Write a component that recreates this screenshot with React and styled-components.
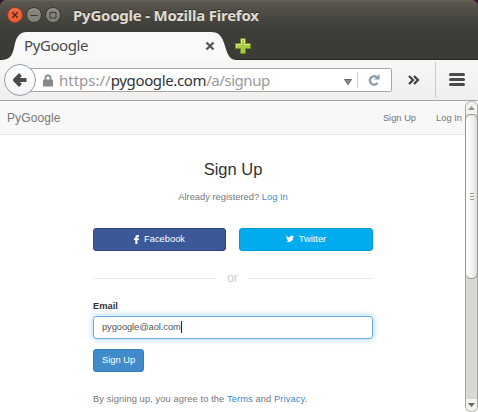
import React from 'react';
import styled, { createGlobalStyle } from 'styled-components';

const Global = createGlobalStyle`
  * { box-sizing: border-box; }
  html, body { margin: 0; width: 478px; height: 412px; overflow: hidden; background: #fff; }
  svg { display: block; flex: none; }
`;
const Window = styled.div`
  width: 478px; height: 412px; display: flex; flex-direction: column; overflow: hidden;
  background: #35102d; font-family: "Noto Sans", sans-serif;
`;
const Chrome = styled.header`
  height: 60px; flex: none; border-radius: 6px 6px 0 0; border-bottom: 1px solid #262520;
  background: linear-gradient(#6a665d 0, #59564e 2px, #3d3c37 29px, #3c3b36 59px);
`;
const TitleBar = styled.div`
  height: 32px; padding: 0 0 3px 7px; display: flex; align-items: center; gap: 3px;
`;
const Title = styled.div`
  margin-left: 9px; font-size: 15px; line-height: 20px; font-weight: 700; white-space: nowrap;
  letter-spacing: ${p => p.$spacing}px; color: #dfdbd2; text-shadow: 0 -1px #302f2b;
`;
const TabStrip = styled.div`
  height: 28px; display: flex; align-items: center; position: relative;
`;
const TabShape = styled.svg`
  position: absolute; left: 0; top: 0;
`;
const TabLabel = styled.div`
  position: relative; width: 181px; padding-left: 24px; font-size: 15px; line-height: 20px;
  letter-spacing: ${p => p.$spacing}px; color: #4c4c4c; margin-top: -2px;
`;
const TabIcon = styled.div`
  position: relative; margin-left: ${p => p.$gap}px;
`;
const Toolbar = styled.div`
  height: 41px; flex: none; display: flex; align-items: center; position: relative;
  background: linear-gradient(#f7f7f6, #f0efed); border-bottom: 1px solid #aaa7a3; padding: 0 13px 1px 4px;
`;
const Address = styled.div`
  width: 374px; height: 24px; margin-left: -18px; padding-left: 25px; margin-top: 1px;
  display: flex; align-items: center; background: #fff; border: 1px solid #a9a7a4;
  border-left: 0; border-radius: 0 2px 2px 0;
`;
const BackButton = styled.div`
  position: relative; z-index: 1; width: 32px; height: 32px; border: 1px solid #8f9bab; border-radius: 50%;
  display: grid; place-items: center; flex: none; background: linear-gradient(#fff, #f4f4f4);
`;
const Url = styled.div`
  width: 285px; margin-left: 6px; font-size: 15px; line-height: 20px; color: #999; white-space: nowrap;
  b { font-weight: 400; color: #333; letter-spacing: -.36px; }
  span { letter-spacing: -.45px; }
`;
const DropMarker = styled.div`
  margin-top: 3px;
`;
const Separator = styled.div`
  width: 1px; height: ${p => p.$height}px; background: #cfcdca; flex: none;
  margin: 0 ${p => p.$right}px 0 ${p => p.$left}px;
`;
const Viewport = styled.div`
  flex: 1; min-height: 0; display: flex; background: #fff;
`;
const Page = styled.div`
  width: 465px; font-family: "Liberation Sans", Arial, sans-serif; font-size: 9.33px; color: #777;
`;
const Nav = styled.nav`
  height: 34px; padding: 0 3px 0 7px; display: flex; align-items: center; gap: 20px;
  background: #f8f8f8; border-bottom: 1px solid #e7e7e7;
`;
const Brand = styled.div`
  flex: 1; font-size: 12px; letter-spacing: .12px;
`;
const Form = styled.main`
  width: 280px; margin-left: 93px;
`;
const Heading = styled.h1`
  margin: 24px 0 0; font-size: 16.5px; line-height: 21px; font-weight: 400; text-align: center; color: #333;
`;
const Registered = styled.p`
  margin: 11px 0 0; line-height: 13px; text-align: center; letter-spacing: 0;
`;
const Link = styled.a`
  color: #428bca;
`;
const SocialRow = styled.div`
  display: grid; grid-template-columns: 133px 134px; gap: 13px; margin-top: 24px;
`;
const Button = styled.button`
  height: 23px; width: ${p => p.$width || 'auto'}; padding: 0 0 1px; border: 1px solid ${p => p.$edge};
  border-radius: 3px; background: ${p => p.$fill}; color: #fff; font: inherit;
  display: flex; align-items: center; justify-content: center; gap: 5px;
`;
const Divider = styled.div`
  height: 16px; margin-top: 19px; display: flex; align-items: center; justify-content: space-between;
  font-size: 12px; line-height: 14px; color: #ccc;
`;
const Rule = styled.div`
  width: ${p => p.$width}px; height: 1px; background: #eaeaea;
`;
const Label = styled.label`
  display: block; margin-top: 14px; line-height: 13px; font-weight: 700; color: #333;
`;
const Field = styled.div`
  height: 23px; margin: 3px 0 10px; padding: 0 0 1px 8px; display: flex; align-items: center; color: #555;
  border: 1px solid #66afe9; border-radius: 3px; box-shadow: 0 0 6px rgba(102,175,233,.6); letter-spacing: -.08px;
`;
const Caret = styled.span`
  width: 1px; height: 12px; background: #222;
`;
const Legal = styled.p`
  margin: 21px 0 0; line-height: 13px; white-space: nowrap; letter-spacing: .09px;
`;
const Scrollbar = styled.div`
  width: 13px; display: flex; flex-direction: column; border: 1px solid #aaa7a3; border-width: 0 1px; background: #d9d8d6;
  border-radius: 6px;
`;
const ScrollButton = styled.div`
  height: 13px; display: grid; place-items: center; background: #f2f2f1;
  border-radius: ${p => (p.$end ? '0 0 6px 6px' : '6px 6px 0 0')};
  border: 1px solid #c1bfbc; border-width: ${p => (p.$end ? '0 0 1px' : '1px 0 0')};
`;
const Thumb = styled.div`
  height: 165px; margin: 0 -1px; border: 1px solid #969390; border-radius: 6px;
  display: flex; flex-direction: column; align-items: center; justify-content: center; gap: 2px;
  background: linear-gradient(90deg, #fff, #f2f2f1 60%, #dddcda);
`;
const Grip = styled.i`
  width: 4px; height: 1px; background: #9c9995;
`;
const Filler = styled.div`
  flex: 1;
`;

function WindowButton({ kind }) {
  const close = kind === 'close';
  return (
    <svg width="16" height="16" viewBox="0 0 16 16">
      <circle cx="8" cy="8" r="7.5" fill={close ? '#ed6238' : '#85827a'} stroke={close ? '#9e3c20' : '#393833'} />
      <path d="M2.5 5A6.5 6.5 0 0 1 13.5 5" fill="none" stroke="#fff" opacity=".2" />
      {close && <path d="M5.3 5.3l5.4 5.4M10.7 5.3l-5.4 5.4" stroke="#502318" strokeWidth="1.3" />}
      {kind === 'minimize' && <path d="M4.5 8.5h7" stroke="#393833" />}
      {kind === 'maximize' && <path d="M5 5.5h6v5.500h-6z" fill="none" stroke="#393833" />}
    </svg>
  );
}

export default function App() {
  return (
    <Window>
      <Global />
      <Chrome>
        <TitleBar>
          <WindowButton kind="close" /><WindowButton kind="minimize" /><WindowButton kind="maximize" />
          <Title $spacing={-0.23}>PyGoogle - Mozilla Firefox</Title>
        </TitleBar>
        <TabStrip>
          <TabShape width="240" height="28">
            <path d="M0 28C10 28 12 24 14 16C16 5 19 0 27 0H211C219 0 222 4 225 14C228 24 230 28 237 28Z" fill="#f9f9f9" />
          </TabShape>
          <TabLabel $spacing={-0.4}>PyGoogle</TabLabel>
          <TabIcon $gap={24}>
            <svg width="10" height="10"><path d="M1.500 1.500l7 7M8.500 1.500l-7 7" stroke="#5a5a5a" strokeWidth="2.4" /></svg>
          </TabIcon>
          <TabIcon $gap={20}>
            <svg width="16" height="16">
              <path d="M5.500.5h5v5h5v5h-5v5h-5v-5h-5v-5h5z" fill="#aacb3d" stroke="#68902b" />
              <path d="M1.500 9.500v-3h5v-5h3v5h5" fill="none" stroke="#dae886" />
            </svg>
          </TabIcon>
        </TabStrip>
      </Chrome>
      <Toolbar>
        <BackButton>
          <svg width="16" height="16"><path d="M8.500 2.500L3 8L8.500 13.500M3.500 8h11" fill="none" stroke="#4c4c4c" strokeWidth="4" strokeLinejoin="round" /></svg>
        </BackButton>
        <Address>
          <svg width="10" height="13"><path d="M2.500 7V4a2.500 2.700 0 0 1 5 0v3" fill="none" stroke="#888" strokeWidth="1.700" /><rect y="5.500" width="10" height="7" rx="1" fill="#888" /></svg>
          <Url>https://<b>pygoogle.com</b><span>/a/signup</span></Url>
          <DropMarker><svg width="8" height="6"><path d="M.5 .5h7L4 5.500z" fill="#888" stroke="#666" /></svg></DropMarker>
          <Separator $height={16} $left={5} $right={10} />
          <svg width="12" height="12"><path d="M9.500 8.800A4.200 4.200 0 1 1 8.500 3" fill="none" stroke="#8a9bac" strokeWidth="2.300" /><path d="M11.500 0v5.500H6z" fill="#8a9bac" /></svg>
        </Address>
        <Filler />
        <svg width="12" height="10"><path d="M1 1l4 4-4 4M6 1l4 4-4 4" fill="none" stroke="#444" strokeWidth="2.300" /></svg>
        <Separator $height={36} $left={15} $right={13} />
        <svg width="16" height="14"><path d="M1.500 1.500h13M1.500 6.500h13M1.500 11.500h13" stroke="#4b4b4b" strokeWidth="3" strokeLinecap="round" /></svg>
      </Toolbar>
      <Viewport>
        <Page>
          <Nav><Brand>PyGoogle</Brand><span>Sign Up</span><span>Log In</span></Nav>
          <Form>
            <Heading>Sign Up</Heading>
            <Registered>Already registered? <Link>Log In</Link></Registered>
            <SocialRow>
              <Button $fill="#3b5998" $edge="#2d4681">
                <svg width="5" height="9"><path d="M1.300 9V5H0V3.300h1.300V2.200Q1.300 0 3.700 0H5v1.700H4.200Q3.400 1.700 3.400 2.400v.9H5L4.700 5H3.400v4z" fill="#fff" /></svg>
                Facebook
              </Button>
              <Button $fill="#00acee" $edge="#009ad5">
                <svg width="8" height="8" viewBox="0 2 24 21"><path d="M24 4.600a10 10 0 0 1-2.800.8 5 5 0 0 0 2.200-2.800 10 10 0 0 1-3.100 1.200 5 5 0 0 0-8.400 4.500A14 14 0 0 1 1.700 3.100a5 5 0 0 0 1.500 6.600 5 5 0 0 1-2.200-.6 5 5 0 0 0 4 4.900 5 5 0 0 1-2.300.1 5 5 0 0 0 4.600 3.400A10 10 0 0 1 0 19.500a14 14 0 0 0 21.500-12.400A10 10 0 0 0 24 4.600z" fill="#fff" /></svg>
                Twitter
              </Button>
            </SocialRow>
            <Divider><Rule $width={123} />or<Rule $width={124} /></Divider>
            <Label>Email</Label>
            <Field>pygoogle@aol.com<Caret /></Field>
            <Button $width="51px" $fill="#428bca" $edge="#357ebd">Sign Up</Button>
            <Legal>By signing up, you agree to the <Link>Terms</Link> and <Link>Privacy</Link>.</Legal>
          </Form>
        </Page>
        <Scrollbar>
          <ScrollButton><svg width="7" height="4"><path d="M0 4h7L3.500 0z" fill="#96938f" /></svg></ScrollButton>
          <Thumb><Grip /><Grip /><Grip /></Thumb>
          <Filler />
          <ScrollButton $end><svg width="7" height="4"><path d="M0 0h7L3.500 4z" fill="#666" /></svg></ScrollButton>
        </Scrollbar>
      </Viewport>
    </Window>
  );
}
